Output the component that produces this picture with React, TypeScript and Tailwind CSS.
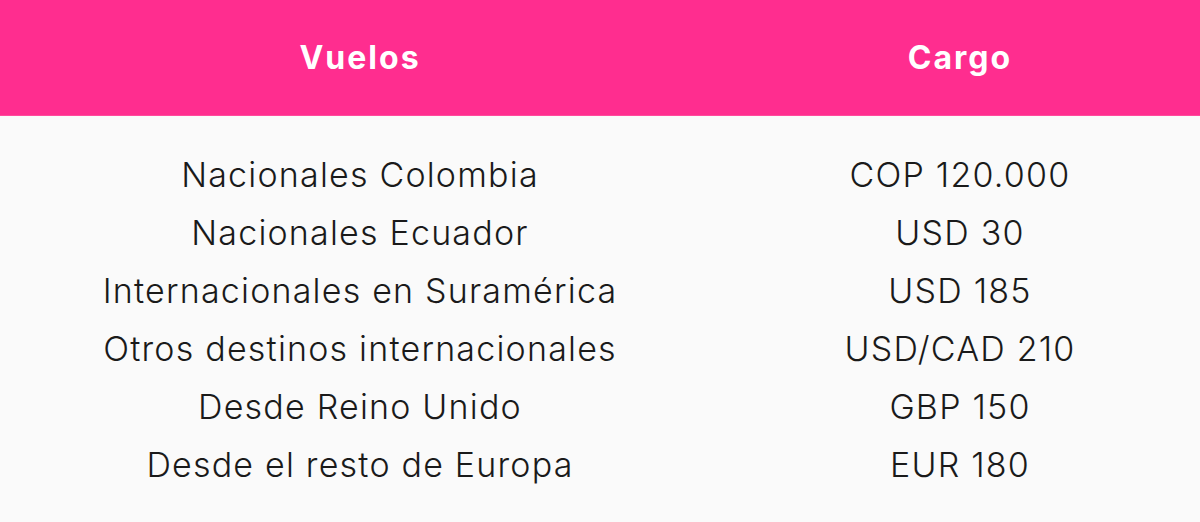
const rows = [
  ['Nacionales Colombia', 'COP 120.000'],
  ['Nacionales Ecuador', 'USD 30'],
  ['Internacionales en Suramérica', 'USD 185'],
  ['Otros destinos internacionales', 'USD/CAD 210'],
  ['Desde Reino Unido', 'GBP 150'],
  ['Desde el resto de Europa', 'EUR 180'],
];

export default function App() {
  return (
    <main className="min-h-screen w-full bg-[#fafafa] font-['Inter',sans-serif]">
      <table className="w-full border-collapse">
        <thead>
          <tr className="h-[115px] bg-[#ff2d8f] border-b border-[#ff4a9c] text-white">
            <th className="w-[720px] pt-[2px] text-[32px] font-bold tracking-[2px]">Vuelos</th>
            <th className="pt-[2px] text-[32px] font-bold tracking-[2px]">Cargo</th>
          </tr>
        </thead>
        <tbody className="text-[34px] font-light tracking-[1.2px] text-[#1a1a1a]">
          <tr>
            <td className="h-[31px]"></td>
            <td></td>
          </tr>
          {rows.map(([vuelo, cargo]) => (
            <tr key={vuelo} className="h-[58px]">
              <td className="text-center leading-[58px]">{vuelo}</td>
              <td className="text-center leading-[58px]">{cargo}</td>
            </tr>
          ))}
        </tbody>
      </table>
    </main>
  );
}
